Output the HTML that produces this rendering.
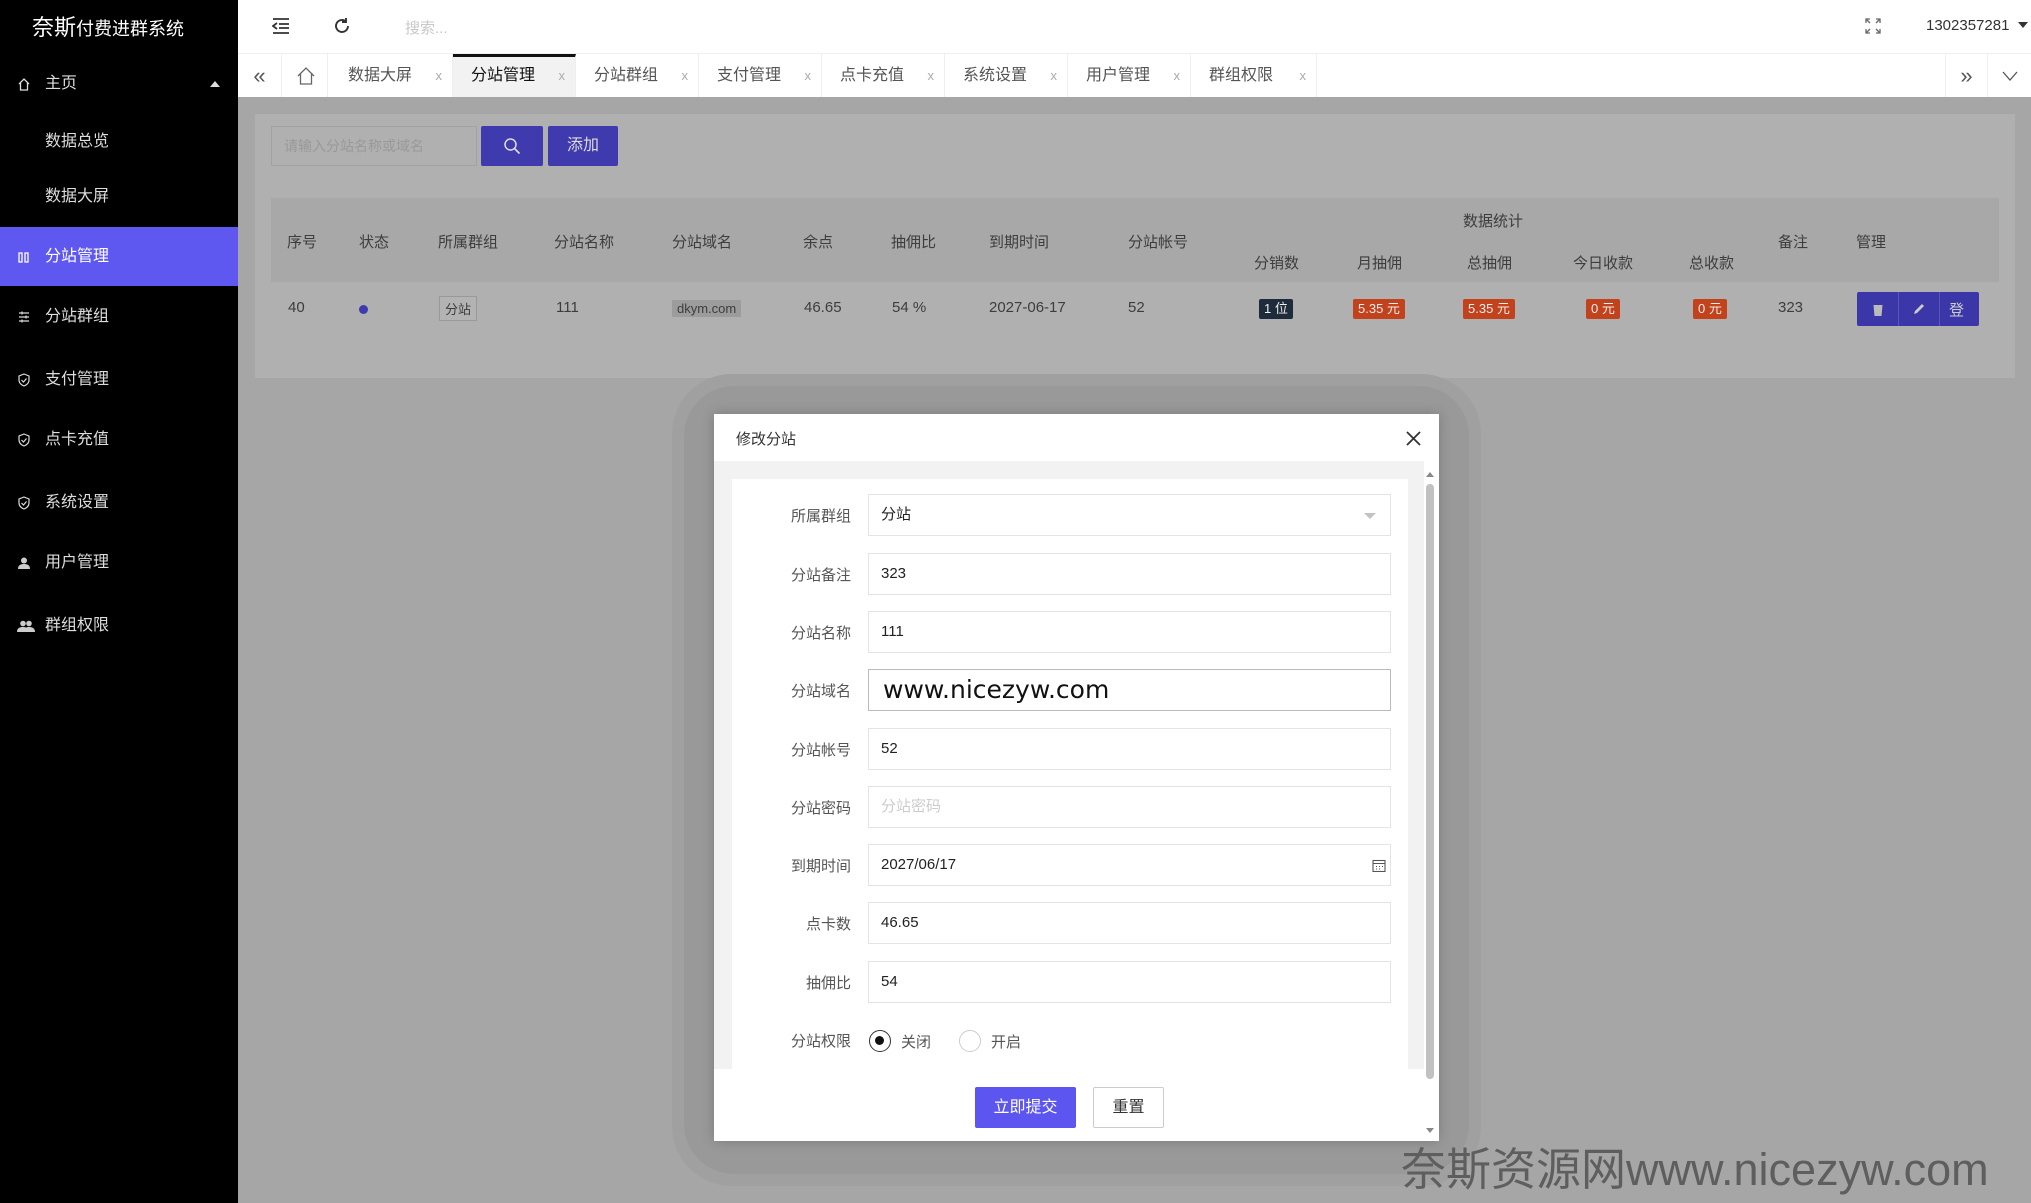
<!DOCTYPE html>
<html><head><meta charset="utf-8"><style>
*{box-sizing:border-box;margin:0;padding:0}
body{width:2031px;height:1203px;overflow:hidden;position:relative;background:#a6a6a6;font-family:"Liberation Sans","Noto Sans CJK SC",sans-serif;color:#333}
.a{position:absolute}
#side{left:0;top:0;width:238px;height:1203px;background:#000;color:#ddd;font-size:16px}
#side .it{position:absolute;left:0;width:238px;height:30px;line-height:30px}
#side .it span{position:absolute;left:45px}
#side .ic{position:absolute;left:17px;top:8px;width:14px;height:14px}
#hdr{left:238px;top:0;width:1793px;height:53px;background:#fff}
#tabs{left:238px;top:53px;width:1793px;height:44px;background:#fff;border-top:1px solid #f0f0f0;font-size:16px;color:#555}
.tab{position:absolute;top:0;height:43px;line-height:43px;border-right:1px solid #eee}
.tab .x{position:absolute;right:10px;color:#aaa;font-size:13px}
.card{left:255px;top:114px;width:1760px;height:264px;background:#b0b0b0}
.th{color:#3d3d3d;font-size:15px}
.td{color:#3d3d3d;font-size:15px;top:299px}
.bd{top:299px;height:20px;line-height:20px;font-size:13px;color:#eee;padding:0 5px;border-radius:2px}
.lbl{position:absolute;right:0;width:120px;text-align:right;color:#555;font-size:15px}
.inp{position:absolute;left:868px;width:523px;height:42px;border:1px solid #e4e4e4;background:#fff;font-size:15px;line-height:40px;padding-left:12px;color:#222}
</style></head><body>
<div id="side" class="a">
 <div class="a" style="left:32px;top:10px;font-size:22px;color:#fff">奈斯<span style="font-size:18px">付费进群系统</span></div>
 <div class="it" style="top:69px"><svg class="ic" viewBox="0 0 14 14"><path d="M2 7L7 2l5 5M3.5 6v7h7V6" fill="none" stroke="#ddd" stroke-width="1.3"/></svg><span>主页</span><div class="a" style="left:210px;top:12px;border-left:5px solid transparent;border-right:5px solid transparent;border-bottom:6px solid #ddd"></div></div>
 <div class="it" style="top:127px"><span>数据总览</span></div>
 <div class="it" style="top:182px"><span>数据大屏</span></div>
 <div class="it" style="top:227px;height:59px;background:#5f58f0;color:#fff;line-height:59px"><svg class="ic" style="top:23px" viewBox="0 0 14 14"><path d="M2 3v9h3V3zM8 3v9h3V3z" fill="none" stroke="#fff" stroke-width="1.3"/></svg><span>分站管理</span></div>
 <div class="it" style="top:302px"><svg class="ic" viewBox="0 0 14 14"><path d="M2 3h10M2 7h10M2 11h10M5 1.5v3M9 5.5v3M5 9.5v3" stroke="#ddd" stroke-width="1.2"/></svg><span>分站群组</span></div>
 <div class="it" style="top:365px"><svg class="ic" viewBox="0 0 14 14"><path d="M7 1l5 2v4c0 3-2.5 5-5 6-2.5-1-5-3-5-6V3zM4.5 7l2 2 3-3.5" fill="none" stroke="#ddd" stroke-width="1.2"/></svg><span>支付管理</span></div>
 <div class="it" style="top:425px"><svg class="ic" viewBox="0 0 14 14"><path d="M7 1l5 2v4c0 3-2.5 5-5 6-2.5-1-5-3-5-6V3zM4.5 7l2 2 3-3.5" fill="none" stroke="#ddd" stroke-width="1.2"/></svg><span>点卡充值</span></div>
 <div class="it" style="top:488px"><svg class="ic" viewBox="0 0 14 14"><path d="M7 1l5 2v4c0 3-2.5 5-5 6-2.5-1-5-3-5-6V3zM4.5 7l2 2 3-3.5" fill="none" stroke="#ddd" stroke-width="1.2"/></svg><span>系统设置</span></div>
 <div class="it" style="top:548px"><svg class="ic" viewBox="0 0 14 14"><circle cx="7" cy="4.5" r="3" fill="#ccc"/><path d="M1 13c0-4 3-5 6-5s6 1 6 5z" fill="#ccc"/></svg><span>用户管理</span></div>
 <div class="it" style="top:611px"><svg class="ic" style="width:18px" viewBox="0 0 18 14"><circle cx="6" cy="4.5" r="2.8" fill="#ccc"/><circle cx="12" cy="4.5" r="2.8" fill="#ccc"/><path d="M0 13c0-4 3-5 6-5s6 1 6 5zM7 13c0-4 2-5 5-5s6 1 6 5z" fill="#ccc"/></svg><span>群组权限</span></div>
</div>
<div id="hdr" class="a">
 <svg class="a" style="left:34px;top:18px" width="18" height="16" viewBox="0 0 18 16"><path d="M1 1h16M7 6h10M7 10h10M1 15h16M5 5L1 8l4 3" fill="none" stroke="#333" stroke-width="1.8"/></svg>
 <svg class="a" style="left:95px;top:17px" width="18" height="18" viewBox="0 0 18 18"><path d="M15 9a6 6 0 1 1-2-4.5M13 1v4h-4" fill="none" stroke="#333" stroke-width="1.9"/></svg>
 <div class="a" style="left:167px;top:17px;font-size:15px;color:#c8c8c8">搜索...</div>
 <svg class="a" style="left:1627px;top:18px" width="16" height="16" viewBox="0 0 16 16"><path d="M1 5V1h4M11 1h4v4M15 11v4h-4M5 15H1v-4M1 1l4 4M15 1l-4 4M15 15l-4-4M1 15l4-4" fill="none" stroke="#666" stroke-width="1.3"/></svg>
 <div class="a" style="left:1688px;top:17px;font-size:15px;color:#333">1302357281</div>
 <div class="a" style="left:1780px;top:22px;border-left:5px solid transparent;border-right:5px solid transparent;border-top:6px solid #333"></div>
</div>
<div id="tabs" class="a">
 <div class="tab" style="left:0;width:44px;text-align:center;font-size:22px;color:#555">«</div>
 <div class="tab" style="left:44px;width:46px"><svg class="a" style="left:15px;top:13px" width="18" height="18" viewBox="0 0 18 18"><path d="M1 9L9 1l8 8M3.5 7v10h11V7" fill="none" stroke="#666" stroke-width="1.3"/></svg></div>
 <div class="tab" style="left:92px;width:123px"><span style="margin-left:18px">数据大屏</span><span class="x">x</span></div>
 <div class="tab" style="left:215px;width:123px;background:#f2f2f2;border-top:3px solid #111;line-height:38px;color:#111"><span style="margin-left:18px">分站管理</span><span class="x">x</span></div>
 <div class="tab" style="left:338px;width:123px"><span style="margin-left:18px">分站群组</span><span class="x">x</span></div>
 <div class="tab" style="left:461px;width:123px"><span style="margin-left:18px">支付管理</span><span class="x">x</span></div>
 <div class="tab" style="left:584px;width:123px"><span style="margin-left:18px">点卡充值</span><span class="x">x</span></div>
 <div class="tab" style="left:707px;width:123px"><span style="margin-left:18px">系统设置</span><span class="x">x</span></div>
 <div class="tab" style="left:830px;width:123px"><span style="margin-left:18px">用户管理</span><span class="x">x</span></div>
 <div class="tab" style="left:953px;width:126px"><span style="margin-left:18px">群组权限</span><span class="x">x</span></div>
 <div class="tab" style="left:1707px;width:43px;text-align:center;font-size:22px;border-left:1px solid #eee">»</div>
 <div class="tab" style="left:1750px;width:43px;text-align:center;border:none"><svg class="a" style="left:14px;top:17px" width="16" height="10" viewBox="0 0 16 10"><path d="M1 1l7 8 7-8" fill="none" stroke="#555" stroke-width="1.3"/></svg></div>
</div>
<div class="a card"></div>
<div class="a" style="left:271px;top:126px;width:206px;height:40px;border:1px solid #a2a2a2;background:#b0b0b0;font-size:14px;color:#999;line-height:38px;padding-left:12px">请输入分站名称或域名</div>
<div class="a" style="left:481px;top:126px;width:62px;height:40px;background:#3f3aad;border-radius:2px"><svg class="a" style="left:22px;top:11px" width="18" height="18" viewBox="0 0 18 18"><circle cx="7.5" cy="7.5" r="5.5" fill="none" stroke="#ddd" stroke-width="1.5"/><path d="M11.5 11.5l5 5" stroke="#ddd" stroke-width="1.7"/></svg></div>
<div class="a" style="left:548px;top:126px;width:70px;height:40px;background:#3f3aad;border-radius:2px;color:#ddd;font-size:16px;text-align:center;line-height:40px">添加</div>
<div class="a" style="left:271px;top:198px;width:1728px;height:84px;background:#a8a8a8"></div>
<div class="a th" style="left:287px;top:231px">序号</div>
<div class="a th" style="left:359px;top:231px">状态</div>
<div class="a th" style="left:438px;top:231px">所属群组</div>
<div class="a th" style="left:554px;top:231px">分站名称</div>
<div class="a th" style="left:672px;top:231px">分站域名</div>
<div class="a th" style="left:803px;top:231px">余点</div>
<div class="a th" style="left:891px;top:231px">抽佣比</div>
<div class="a th" style="left:989px;top:231px">到期时间</div>
<div class="a th" style="left:1128px;top:231px">分站帐号</div>
<div class="a th" style="left:1463px;top:210px">数据统计</div>
<div class="a th" style="left:1254px;top:252px">分销数</div>
<div class="a th" style="left:1357px;top:252px">月抽佣</div>
<div class="a th" style="left:1467px;top:252px">总抽佣</div>
<div class="a th" style="left:1573px;top:252px">今日收款</div>
<div class="a th" style="left:1689px;top:252px">总收款</div>
<div class="a th" style="left:1778px;top:231px">备注</div>
<div class="a th" style="left:1856px;top:231px">管理</div>
<div class="a td" style="left:288px">40</div>
<div class="a" style="left:359px;top:305px;width:9px;height:9px;border-radius:50%;background:#3f3aad"></div>
<div class="a td" style="left:439px;top:296px;border:1px solid #999;padding:2px 5px;font-size:13px;background:#b3b3b3">分站</div>
<div class="a td" style="left:556px">111</div>
<div class="a td" style="left:672px;top:300px;background:#9c9c9c;padding:1px 5px;font-size:13px">dkym.com</div>
<div class="a td" style="left:804px">46.65</div>
<div class="a td" style="left:892px">54 %</div>
<div class="a td" style="left:989px">2027-06-17</div>
<div class="a td" style="left:1128px">52</div>
<div class="a bd" style="left:1259px;background:#1e2b3b">1 位</div>
<div class="a bd" style="left:1353px;background:#c2421c">5.35 元</div>
<div class="a bd" style="left:1463px;background:#c2421c">5.35 元</div>
<div class="a bd" style="left:1586px;background:#c2421c">0 元</div>
<div class="a bd" style="left:1693px;background:#c2421c">0 元</div>
<div class="a td" style="left:1778px">323</div>
<div class="a" style="left:1857px;top:292px;width:122px;height:34px;background:#3c37a8;border-radius:2px">
 <div class="a" style="left:41px;top:0;width:1px;height:34px;background:#5a56b8"></div>
 <div class="a" style="left:82px;top:0;width:1px;height:34px;background:#5a56b8"></div>
 <svg class="a" style="left:15px;top:10px" width="12" height="14" viewBox="0 0 12 14"><path d="M0 2h12M4 0h4M1.5 3h9l-1 11h-7z" fill="#bbb"/></svg>
 <svg class="a" style="left:55px;top:10px" width="14" height="14" viewBox="0 0 14 14"><path d="M2 12l1-3 7-7 2 2-7 7z" fill="#ccc"/></svg>
 <div class="a" style="left:92px;top:7px;color:#ccc;font-size:15px">登</div>
</div>
<div class="a" style="left:672px;top:374px;width:809px;height:812px;border-radius:60px;background:#a0a0a0"></div>
<div class="a" style="left:684px;top:386px;width:785px;height:788px;border-radius:50px;background:#999"></div>
<div class="a" style="left:714px;top:414px;width:725px;height:727px;background:#fff;box-shadow:0 0 12px rgba(0,0,0,.2)">
 <div class="a" style="left:22px;top:14px;font-size:15px;color:#333">修改分站</div>
 <svg class="a" style="left:692px;top:17px" width="15" height="15" viewBox="0 0 15 15"><path d="M1 1l13 13M14 1L1 14" stroke="#333" stroke-width="1.8"/></svg>
 <div class="a" style="left:0;top:47px;width:710px;height:608px;background:#f2f2f2"></div>
 <div class="a" style="left:18px;top:65px;width:676px;height:590px;background:#fff"></div>
 <div class="a" style="left:712px;top:70px;width:8px;height:595px;border-radius:4px;background:#c1c1c1"></div>
 <div class="a" style="left:712px;top:58px;border-left:4px solid transparent;border-right:4px solid transparent;border-bottom:5px solid #888"></div>
 <div class="a" style="left:712px;top:714px;border-left:4px solid transparent;border-right:4px solid transparent;border-top:5px solid #888"></div>
</div>
<div class="a" style="left:731px;top:0;width:120px;height:1203px">
 <div class="lbl" style="top:505px">所属群组</div>
 <div class="lbl" style="top:564px">分站备注</div>
 <div class="lbl" style="top:622px">分站名称</div>
 <div class="lbl" style="top:680px">分站域名</div>
 <div class="lbl" style="top:739px">分站帐号</div>
 <div class="lbl" style="top:797px">分站密码</div>
 <div class="lbl" style="top:855px">到期时间</div>
 <div class="lbl" style="top:913px">点卡数</div>
 <div class="lbl" style="top:972px">抽佣比</div>
 <div class="lbl" style="top:1030px">分站权限</div>
</div>
<div class="inp" style="top:494px">分站<div class="a" style="right:14px;top:18px;border-left:6px solid transparent;border-right:6px solid transparent;border-top:6px solid #c2c2c2"></div></div>
<div class="inp" style="top:553px">323</div>
<div class="inp" style="top:611px">111</div>
<div class="inp" style="top:669px;border-color:#bbb;font-size:25px;padding-left:14px;font-family:'DejaVu Sans',sans-serif;color:#111">www.nicezyw.com</div>
<div class="inp" style="top:728px">52</div>
<div class="inp" style="top:786px;color:#ccc">分站密码</div>
<div class="inp" style="top:844px">2027/06/17<svg class="a" style="right:4px;top:14px" width="14" height="13" viewBox="0 0 14 13"><rect x="1" y="1.5" width="12" height="11" fill="none" stroke="#555" stroke-width="1.1"/><path d="M1 4.5h12M4 7.5h1M7 7.5h1M10 7.5h1M4 10h1M7 10h1" stroke="#555"/></svg></div>
<div class="inp" style="top:902px">46.65</div>
<div class="inp" style="top:961px">54</div>
<div class="a" style="left:869px;top:1030px;width:22px;height:22px;border-radius:50%;border:1.5px solid #333"><div class="a" style="left:5px;top:5px;width:9px;height:9px;border-radius:50%;background:#111"></div></div>
<div class="a" style="left:901px;top:1031px;font-size:15px;color:#555">关闭</div>
<div class="a" style="left:959px;top:1030px;width:22px;height:22px;border-radius:50%;border:1.5px solid #ccc"></div>
<div class="a" style="left:991px;top:1031px;font-size:15px;color:#555">开启</div>
<div class="a" style="left:975px;top:1087px;width:101px;height:41px;background:#5c55ef;color:#fff;font-size:16px;text-align:center;line-height:41px;border-radius:2px">立即提交</div>
<div class="a" style="left:1093px;top:1087px;width:71px;height:41px;border:1px solid #ccc;background:#fff;color:#333;font-size:16px;text-align:center;line-height:39px;border-radius:2px">重置</div>
<div class="a" style="left:1401px;top:1133px;font-size:45px;color:#5e5e5e;white-space:nowrap">奈斯资源网www.nicezyw.com</div>
</body></html>
